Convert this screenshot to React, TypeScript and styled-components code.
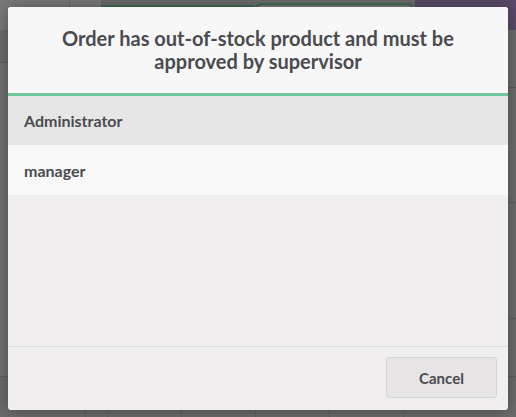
import styled, { createGlobalStyle } from "styled-components";

const GlobalStyle = createGlobalStyle`
  html, body {
    margin: 0;
    padding: 0;
  }
  body {
    font-family: Lato, "Noto Sans", sans-serif;
  }
`;

const users = ["Administrator", "manager"];

// Dimmed point-of-sale screen behind the popup
function PosBackground() {
  return (
    <Screen>
      <TopBar>
        <TopLeft />
        <TopGap />
        <OrderTab />
        <ActiveTab />
        <UserArea />
      </TopBar>
      <Middle>
        <LeftPane />
        <RightPane>
          <RightLine />
          <RightLine />
          <RightLine />
        </RightPane>
      </Middle>
      <Keypad>
        <KeySpacer />
        <Key $narrow />
        <Key>C</Key>
        <Key>0</Key>
        <Key />
        <Key>
          <svg width="20" height="14" viewBox="0 0 20 14" fill="none">
            <path
              d="M6 1h12v12H6L1 7z"
              stroke="#2a2a2a"
              strokeWidth="1.6"
              strokeLinejoin="round"
            />
            <path d="M10 4l5 6M15 4l-5 6" stroke="#2a2a2a" strokeWidth="1.6" />
          </svg>
        </Key>
        <KeyRest />
      </Keypad>
    </Screen>
  );
}

export default function App() {
  return (
    <>
      <GlobalStyle />
      <Page>
        <PosBackground />
        <Backdrop>
          <Popup>
            <Title>Order has out-of-stock product and must be approved by supervisor</Title>
            <List>
              {users.map((name, i) => (
                <Item key={name} $selected={i === 0}>
                  {name}
                </Item>
              ))}
            </List>
            <Footer>
              <Button>Cancel</Button>
            </Footer>
          </Popup>
        </Backdrop>
      </Page>
    </>
  );
}

const Page = styled.div`
  position: relative;
  width: 516px;
  height: 417px;
  overflow: hidden;
  background: #6c6c6c;
`;

const Screen = styled.div`
  display: flex;
  flex-direction: column;
  height: 100%;
`;

const TopBar = styled.div`
  display: flex;
  height: 30px;
  flex-shrink: 0;
`;

const TopLeft = styled.div`
  width: 69px;
  background: #7a7a7a;
  border-right: 1px solid #6a6a6a;
`;

const TopGap = styled.div`
  width: 31px;
  background: #7a7a7a;
`;

const OrderTab = styled.div`
  width: 153px;
  background: #7a7a7a;
  border-top: 6px solid #3f6b52;
  box-sizing: border-box;
  position: relative;
  top: 5px;
`;

const ActiveTab = styled.div`
  width: 157px;
  margin-top: 3px;
  border: 2px solid #3f6b52;
  border-radius: 8px 8px 0 0;
  background: #7a7a7a;
`;

const UserArea = styled.div`
  flex: 1;
  background: #5a4b6a;
`;

const Middle = styled.div`
  display: flex;
  flex: 1;
`;

const LeftPane = styled.div`
  flex: 1;
  background: #707070;
  border-top: 1px solid #5e5e5e;
  margin-top: 32px;
`;

const RightPane = styled.div`
  width: 107px;
  display: flex;
  flex-direction: column;
  justify-content: space-around;
  background: #6c6c6c;
`;

const RightLine = styled.div`
  height: 1px;
  background: #5c5c5c;
`;

const Keypad = styled.div`
  display: flex;
  height: 40px;
  background: #6b6b6b;
  border-top: 1px solid #5e5e5e;
`;

const KeySpacer = styled.div`
  width: 85px;
  border-right: 1px solid #5e5e5e;
`;

const Key = styled.div<{ $narrow?: boolean }>`
  width: ${(p) => (p.$narrow ? "21px" : "73px")};
  border-right: 1px solid #5e5e5e;
  display: flex;
  justify-content: center;
  padding-top: 6px;
  font-family: Lato, sans-serif;
  font-size: 22px;
  color: #2a2a2a;
`;

const KeyRest = styled.div`
  flex: 1;
`;

const Backdrop = styled.div`
  position: absolute;
  inset: 0;
  display: flex;
  align-items: center;
  justify-content: center;
`;

const Popup = styled.div`
  width: 500px;
  height: 403px;
  display: flex;
  flex-direction: column;
  background: #f0eeef;
  border-radius: 3px;
  overflow: hidden;
  box-shadow: 0 0 16px rgba(0, 0, 0, 0.35);
`;

const Title = styled.header`
  height: 89px;
  box-sizing: border-box;
  display: flex;
  align-items: center;
  justify-content: center;
  padding: 0 40px;
  text-align: center;
  background: #f7f7f7;
  border-bottom: 3px solid #6ec89b;
  font-size: 20px;
  font-weight: 700;
  line-height: 23px;
  color: #4a4b50;
  flex-shrink: 0;
`;

const List = styled.div`
  flex: 1;
  display: flex;
  flex-direction: column;
`;

const Item = styled.div<{ $selected?: boolean }>`
  height: ${(p) => (p.$selected ? "49px" : "50px")};
  box-sizing: border-box;
  display: flex;
  align-items: center;
  padding: 0 16px;
  background: ${(p) => (p.$selected ? "#e6e6e6" : "#f8f8f8")};
  font-size: 16px;
  font-weight: 700;
  color: #4a4b50;
`;

const Footer = styled.footer`
  height: 64px;
  box-sizing: border-box;
  flex-shrink: 0;
  display: flex;
  justify-content: flex-end;
  align-items: flex-start;
  padding: 10px 11px 0 0;
  border-top: 1px solid #dcdbdb;
`;

const Button = styled.button`
  width: 111px;
  height: 41px;
  background: #e6e4e5;
  border: 1px solid #d6d5d5;
  border-radius: 3px;
  font-family: Lato, "Noto Sans", sans-serif;
  font-size: 15px;
  font-weight: 700;
  color: #4a4b50;
  cursor: pointer;
`;
